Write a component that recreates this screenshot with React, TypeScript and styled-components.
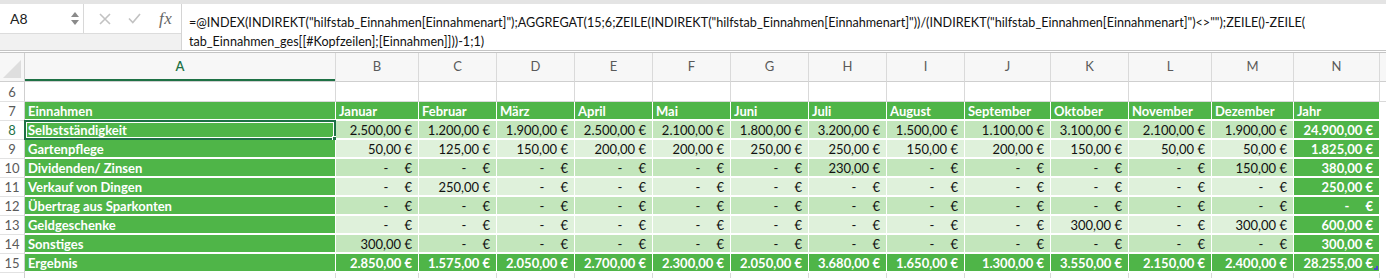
import React from "react";
import styled, { createGlobalStyle, css } from "styled-components";

const GlobalStyle = createGlobalStyle`
  html, body {
    margin: 0;
    padding: 0;
    background: #ffffff;
  }
  body {
    font-family: "Lato", "Open Sans", sans-serif;
    overflow: hidden;
  }
`;

const GREEN = "#4fb548";
const DARK_ROW = "#c3e6bc";
const LIGHT_ROW = "#dff1db";
const EXCEL_GREEN = "#1e7145";
const GRID = "#d9d9d9";

const COLS = [
  { key: "A", w: 311 },
  { key: "B", w: 83 },
  { key: "C", w: 78 },
  { key: "D", w: 78 },
  { key: "E", w: 78 },
  { key: "F", w: 78 },
  { key: "G", w: 78 },
  { key: "H", w: 78 },
  { key: "I", w: 78 },
  { key: "J", w: 86 },
  { key: "K", w: 78 },
  { key: "L", w: 83 },
  { key: "M", w: 82 },
  { key: "N", w: 86 },
];

const MONTHS = [
  "Januar",
  "Februar",
  "März",
  "April",
  "Mai",
  "Juni",
  "Juli",
  "August",
  "September",
  "Oktober",
  "November",
  "Dezember",
  "Jahr",
];

// "-" steht für einen leeren Betrag (Buchhaltungsformat)
const ROWS: { label: string; values: string[] }[] = [
  {
    label: "Selbstständigkeit",
    values: ["2.500,00", "1.200,00", "1.900,00", "2.500,00", "2.100,00", "1.800,00", "3.200,00", "1.500,00", "1.100,00", "3.100,00", "2.100,00", "1.900,00", "24.900,00"],
  },
  {
    label: "Gartenpflege",
    values: ["50,00", "125,00", "150,00", "200,00", "200,00", "250,00", "250,00", "150,00", "200,00", "150,00", "50,00", "50,00", "1.825,00"],
  },
  {
    label: "Dividenden/ Zinsen",
    values: ["-", "-", "-", "-", "-", "-", "230,00", "-", "-", "-", "-", "150,00", "380,00"],
  },
  {
    label: "Verkauf von Dingen",
    values: ["-", "250,00", "-", "-", "-", "-", "-", "-", "-", "-", "-", "-", "250,00"],
  },
  {
    label: "Übertrag aus Sparkonten",
    values: ["-", "-", "-", "-", "-", "-", "-", "-", "-", "-", "-", "-", "-"],
  },
  {
    label: "Geldgeschenke",
    values: ["-", "-", "-", "-", "-", "-", "-", "-", "-", "300,00", "-", "300,00", "600,00"],
  },
  {
    label: "Sonstiges",
    values: ["300,00", "-", "-", "-", "-", "-", "-", "-", "-", "-", "-", "-", "300,00"],
  },
];

const TOTALS = ["2.850,00", "1.575,00", "2.050,00", "2.700,00", "2.300,00", "2.050,00", "3.680,00", "1.650,00", "1.300,00", "3.550,00", "2.150,00", "2.400,00", "28.255,00"];

/* ---------- formula bar ---------- */

const TopStrip = styled.div`
  height: 4px;
  background: #e4e4e4;
`;

const FormulaBar = styled.div`
  display: flex;
  height: 46px;
  border-bottom: 3px double #c4c4c4;
`;

const Tools = styled.div`
  width: 181px;
  display: flex;
  flex-direction: column;
  border-right: 1px solid #d4d4d4;
`;

const ToolRow = styled.div`
  height: 29px;
  display: flex;
  background: #ffffff;
`;

const ToolFiller = styled.div`
  flex: 1;
  background: #f1f1f1;
  border-top: 1px solid #dcdcdc;
`;

const NameBox = styled.div`
  width: 84px;
  box-sizing: border-box;
  display: flex;
  align-items: center;
  justify-content: space-between;
  padding: 0 4px 0 10px;
  font-size: 14px;
  color: #222;
  border-right: 1px solid #d8d8d8;
`;

const Stepper = styled.div`
  display: flex;
  flex-direction: column;
  gap: 3px;
`;

const Arrow = styled.span<{ $down?: boolean }>`
  width: 0;
  height: 0;
  border-left: 4px solid transparent;
  border-right: 4px solid transparent;
  ${(p) =>
    p.$down
      ? css`border-top: 5px solid #8a8a8a;`
      : css`border-bottom: 5px solid #8a8a8a;`}
`;

const IconGroup = styled.div`
  flex: 1;
  display: flex;
  align-items: center;
  gap: 17px;
  padding-left: 15px;
`;

const Fx = styled.span`
  font-family: "Liberation Serif", "DejaVu Serif", serif;
  font-style: italic;
  font-size: 17px;
  color: #666;
  margin-left: 1px;
  letter-spacing: 0.5px;
`;

const FormulaText = styled.div`
  flex: 1;
  padding: 9px 0 0 7px;
  font-size: 12.6px;
  line-height: 19px;
  color: #111;
  white-space: nowrap;
  overflow: hidden;
`;

const FormulaLine = styled.div``;

/* ---------- sheet ---------- */

const Sheet = styled.div`
  display: flex;
  flex-direction: column;
`;

const Row = styled.div<{ $h: number }>`
  display: flex;
  height: ${(p) => p.$h}px;
`;

const RowHead = styled.div<{ $active?: boolean }>`
  width: 25px;
  flex: none;
  box-sizing: border-box;
  display: flex;
  align-items: center;
  justify-content: center;
  font-size: 13px;
  color: ${(p) => (p.$active ? EXCEL_GREEN : "#5a5a5a")};
  background: #ffffff;
  border-right: 1px solid #cfcfcf;
  border-bottom: 1px solid #e2e2e2;
`;

const Corner = styled.div`
  width: 25px;
  flex: none;
  box-sizing: border-box;
  position: relative;
  background: #f7f7f7;
  border-right: 1px solid #cfcfcf;
  border-bottom: 1px solid #cfcfcf;
  &::after {
    content: "";
    position: absolute;
    right: 3px;
    bottom: 3px;
    width: 0;
    height: 0;
    border-left: 18px solid transparent;
    border-bottom: 18px solid #dedede;
  }
`;

const ColHead = styled.div<{ $w: number; $active?: boolean }>`
  width: ${(p) => p.$w}px;
  flex: none;
  box-sizing: border-box;
  display: flex;
  align-items: center;
  justify-content: center;
  font-size: 13px;
  padding-bottom: 2px;
  color: ${(p) => (p.$active ? EXCEL_GREEN : "#5a5a5a")};
  font-weight: ${(p) => (p.$active ? 600 : 400)};
  background: #f7f7f7;
  border-right: 1px solid #dadada;
  border-bottom: 1px solid #cfcfcf;
  box-shadow: ${(p) => (p.$active ? `inset 0 -2px 0 ${EXCEL_GREEN}` : "none")};
`;

const HeadRest = styled.div`
  flex: 1;
  background: #f7f7f7;
  border-bottom: 1px solid #cfcfcf;
`;

type Tone = "green" | "dark" | "light" | "blank";

const toneBg: Record<Tone, string> = {
  green: GREEN,
  dark: DARK_ROW,
  light: LIGHT_ROW,
  blank: "#ffffff",
};

const Cell = styled.div<{ $w: number; $tone: Tone; $right?: boolean }>`
  position: relative;
  width: ${(p) => p.$w}px;
  flex: none;
  box-sizing: border-box;
  display: flex;
  align-items: center;
  justify-content: ${(p) => (p.$right ? "flex-end" : "flex-start")};
  padding: ${(p) => (p.$right ? "1px 6px 0 0" : "1px 0 0 3px")};
  font-size: 13px;
  white-space: nowrap;
  background: ${(p) => toneBg[p.$tone]};
  color: ${(p) => (p.$tone === "green" ? "#ffffff" : "#111111")};
  font-weight: ${(p) => (p.$tone === "green" ? 700 : 400)};
  ${(p) =>
    p.$tone === "blank"
      ? css`
          border-right: 1px solid ${GRID};
          border-bottom: 1px solid ${GRID};
        `
      : css`
          border-right: 1px solid #ffffff;
          border-bottom: 2px solid #ffffff;
        `}
`;

const RowRest = styled.div<{ $grid?: boolean }>`
  flex: 1;
  background: #ffffff;
  border-bottom: 1px solid ${(p) => (p.$grid ? GRID : "#ffffff")};
`;

const Dash = styled.span`
  margin-right: 16px;
`;

const Selection = styled.div`
  position: absolute;
  left: -1px;
  top: -1px;
  right: -1px;
  bottom: -2px;
  border: 2px solid ${EXCEL_GREEN};
  box-shadow: inset 0 0 0 1px #ffffff;
  pointer-events: none;
  &::after {
    content: "";
    position: absolute;
    right: -5px;
    bottom: -5px;
    width: 5px;
    height: 5px;
    background: ${EXCEL_GREEN};
    border: 1px solid #ffffff;
  }
`;

const ResizeMark = styled.div`
  position: absolute;
  right: 1px;
  bottom: 1px;
  width: 4px;
  height: 4px;
  border-right: 2px solid #4b4bc8;
  border-bottom: 2px solid #4b4bc8;
  box-sizing: border-box;
`;

function Amount({ v }: { v: string }) {
  if (v === "-") {
    return (
      <>
        <Dash>-</Dash>€
      </>
    );
  }
  return <>{v} €</>;
}

function CrossIcon() {
  return (
    <svg width="12" height="12" viewBox="0 0 12 12">
      <path d="M1 1 L11 11 M11 1 L1 11" stroke="#c2c2c2" strokeWidth="1.6" fill="none" />
    </svg>
  );
}

function CheckIcon() {
  return (
    <svg width="13" height="11" viewBox="0 0 13 11">
      <path d="M1 5.5 L4.8 9.5 L12 1" stroke="#c2c2c2" strokeWidth="1.6" fill="none" />
    </svg>
  );
}

export default function App() {
  return (
    <>
      <GlobalStyle />
      <TopStrip />
      <FormulaBar>
        <Tools>
          <ToolRow>
            <NameBox>
              A8
              <Stepper>
                <Arrow />
                <Arrow $down />
              </Stepper>
            </NameBox>
            <IconGroup>
              <CrossIcon />
              <CheckIcon />
              <Fx>fx</Fx>
            </IconGroup>
          </ToolRow>
          <ToolFiller />
        </Tools>
        <FormulaText>
          <FormulaLine>
            {'=@INDEX(INDIREKT("hilfstab_Einnahmen[Einnahmenart]");AGGREGAT(15;6;ZEILE(INDIREKT("hilfstab_Einnahmen[Einnahmenart]"))/(INDIREKT("hilfstab_Einnahmen[Einnahmenart]")<>"");ZEILE()-ZEILE('}
          </FormulaLine>
          <FormulaLine>{"tab_Einnahmen_ges[[#Kopfzeilen];[Einnahmen]]))-1;1)"}</FormulaLine>
        </FormulaText>
      </FormulaBar>

      <Sheet>
        <Row $h={29}>
          <Corner />
          {COLS.map((c) => (
            <ColHead key={c.key} $w={c.w} $active={c.key === "A"}>
              {c.key}
            </ColHead>
          ))}
          <HeadRest />
        </Row>

        <Row $h={20}>
          <RowHead>6</RowHead>
          {COLS.map((c) => (
            <Cell key={c.key} $w={c.w} $tone="blank" />
          ))}
          <RowRest $grid />
        </Row>

        <Row $h={19}>
          <RowHead>7</RowHead>
          <Cell $w={COLS[0].w} $tone="green">
            Einnahmen
          </Cell>
          {MONTHS.map((m, i) => (
            <Cell key={m} $w={COLS[i + 1].w} $tone="green">
              {m}
            </Cell>
          ))}
          <RowRest />
        </Row>

        {ROWS.map((r, ri) => {
          const tone: Tone = ri % 2 === 0 ? "dark" : "light";
          return (
            <Row $h={19} key={r.label}>
              <RowHead $active={ri === 0}>{ri + 8}</RowHead>
              <Cell $w={COLS[0].w} $tone="green">
                {r.label}
                {ri === 0 && <Selection />}
              </Cell>
              {r.values.map((v, i) => (
                <Cell key={i} $w={COLS[i + 1].w} $tone={i === 12 ? "green" : tone} $right>
                  <Amount v={v} />
                </Cell>
              ))}
              <RowRest />
            </Row>
          );
        })}

        <Row $h={19}>
          <RowHead>15</RowHead>
          <Cell $w={COLS[0].w} $tone="green">
            Ergebnis
          </Cell>
          {TOTALS.map((v, i) => (
            <Cell key={i} $w={COLS[i + 1].w} $tone="green" $right>
              <Amount v={v} />
              {i === 12 && <ResizeMark />}
            </Cell>
          ))}
          <RowRest />
        </Row>

        {/* Zeile 16 ist nur angeschnitten sichtbar */}
        <Row $h={20}>
          <RowHead />
          {COLS.map((c) => (
            <Cell key={c.key} $w={c.w} $tone="blank" />
          ))}
          <RowRest $grid />
        </Row>
      </Sheet>
    </>
  );
}
